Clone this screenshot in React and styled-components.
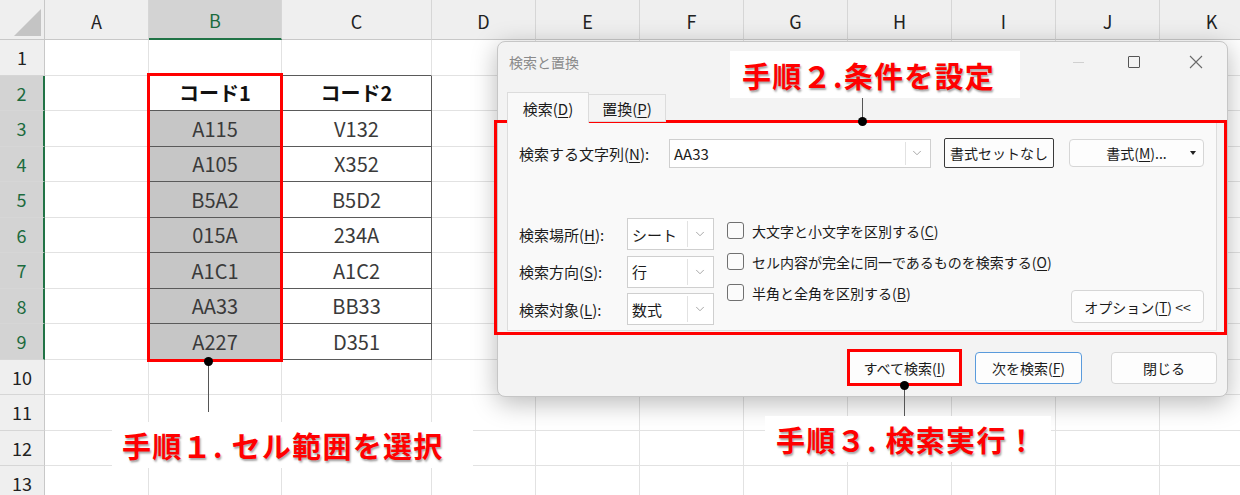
import React from "react";
import styled, { createGlobalStyle, css } from "styled-components";
import { ChevronDown } from "lucide-react";

const JP = `"Noto Sans CJK JP", "Noto Sans", sans-serif`;
const GREEN = "#217346";

const GlobalStyle = createGlobalStyle`
  html, body { margin: 0; padding: 0; background: #fff; }
  body { font-family: ${JP}; }
  * { box-sizing: border-box; }
`;

const Frame = styled.div`
  position: relative;
  width: 1240px;
  height: 495px;
  overflow: hidden;
  background: #fff;
`;

/* ---------- spreadsheet ---------- */

const Sheet = styled.div`
  display: grid;
  grid-template-columns: 45px 104px 133px 150px repeat(8, 104px);
  grid-template-rows: 40px repeat(13, 35.5px);
  font-family: ${JP};
`;

const Corner = styled.div`
  position: relative;
  background: #efefef;
  border-right: 1px solid #c8c8c8;
  border-bottom: 1px solid #c8c8c8;
  &::after {
    content: "";
    position: absolute;
    right: 3px;
    bottom: 3px;
    border-style: solid;
    border-width: 0 0 27px 27px;
    border-color: transparent transparent #c4c4c4 transparent;
  }
`;

const ColHead = styled.div`
  display: flex;
  align-items: center;
  justify-content: center;
  background: #efefef;
  border-right: 1px solid #d6d6d6;
  border-bottom: 1px solid #c8c8c8;
  font-size: 18px;
  color: #222;
  padding-top: 2px;
  ${(p) =>
    p.$active &&
    css`
      background: #d3d3d3;
      color: #1c6b3e;
      border-bottom: 2px solid ${GREEN};
    `}
`;

const RowHead = styled.div`
  display: flex;
  align-items: center;
  justify-content: center;
  background: #efefef;
  border-right: 1px solid #c8c8c8;
  border-bottom: 1px solid #d6d6d6;
  font-size: 18px;
  color: #222;
  ${(p) =>
    p.$active &&
    css`
      background: #d3d3d3;
      color: #1c6b3e;
      border-right: 2px solid ${GREEN};
    `}
`;

const Cell = styled.div`
  display: flex;
  align-items: center;
  justify-content: center;
  border-right: 1px solid ${(p) => (p.$darkRight ? "#5a5a5a" : "#e2e2e2")};
  border-bottom: 1px solid ${(p) => (p.$darkBottom ? "#5a5a5a" : "#e2e2e2")};
  background: ${(p) => (p.$fill ? "#c6c6c6" : "#fff")};
  font-size: 20px;
  font-weight: ${(p) => (p.$bold ? 700 : 400)};
  color: ${(p) => (p.$bold ? "#111" : "#3a3a3a")};
`;

const COLS = ["A", "B", "C", "D", "E", "F", "G", "H", "I", "J", "K"];
const colB = ["コード1", "A115", "A105", "B5A2", "015A", "A1C1", "AA33", "A227"];
const colC = ["コード2", "V132", "X352", "B5D2", "234A", "A1C2", "BB33", "D351"];

function Spreadsheet() {
  const rows = [];
  for (let r = 1; r <= 13; r++) {
    const inTable = r >= 2 && r <= 9;
    rows.push(
      <RowHead key={"h" + r} $active={inTable}>
        {r}
      </RowHead>
    );
    COLS.forEach((c, i) => {
      let text = "";
      if (inTable && c === "B") text = colB[r - 2];
      if (inTable && c === "C") text = colC[r - 2];
      const darkRight = inTable && i <= 2;
      const darkBottom = (c === "B" || c === "C") && r >= 1 && r <= 9;
      rows.push(
        <Cell
          key={c + r}
          $darkRight={darkRight}
          $darkBottom={darkBottom}
          $fill={c === "B" && r >= 3 && r <= 9}
          $bold={r === 2 && inTable}
        >
          {text}
        </Cell>
      );
    });
  }
  return (
    <Sheet>
      <Corner />
      {COLS.map((c) => (
        <ColHead key={c} $active={c === "B"}>
          {c}
        </ColHead>
      ))}
      {rows}
    </Sheet>
  );
}

/* ---------- find & replace dialog ---------- */

const Dialog = styled.div`
  position: absolute;
  left: 497px;
  top: 41px;
  width: 731px;
  height: 356px;
  background: #f3f3f3;
  border: 1px solid #c6c6c6;
  border-radius: 8px;
  box-shadow: 0 6px 26px rgba(0, 0, 0, 0.28);
  display: flex;
  flex-direction: column;
  font-family: ${JP};
  font-size: 14px;
  color: #1b1b1b;
`;

const TitleBar = styled.div`
  height: 40px;
  display: flex;
  align-items: center;
  padding-left: 11px;
`;

const Title = styled.span`
  color: #8a8a8a;
  font-size: 14px;
`;

const WinControls = styled.div`
  margin-left: auto;
  display: flex;
  height: 100%;
`;

const WinButton = styled.div`
  width: ${(p) => p.$w}px;
  height: 100%;
  display: flex;
  align-items: center;
  justify-content: center;
`;

const MinGlyph = styled.span`
  width: 11px;
  height: 1px;
  background: #d0d0d0;
`;

const MaxGlyph = styled.span`
  width: 12px;
  height: 12px;
  border: 1px solid #555;
  border-radius: 1px;
`;

const TabRow = styled.div`
  margin-top: 10px;
  padding-left: 9px;
  display: flex;
  align-items: flex-end;
  height: 30px;
  position: relative;
  z-index: 1;
`;

const Tab = styled.div`
  height: ${(p) => (p.$active ? 31 : 28)}px;
  width: ${(p) => p.$w}px;
  display: flex;
  align-items: center;
  justify-content: center;
  font-size: 15px;
  border: 1px solid #dcdcdc;
  border-bottom: ${(p) => (p.$active ? "none" : "1px solid #dcdcdc")};
  background: ${(p) => (p.$active ? "#f9f9f9" : "#f4f4f4")};
  margin-bottom: ${(p) => (p.$active ? -1 : 0)}px;
  border-left: ${(p) => (p.$active ? "1px solid #dcdcdc" : "none")};
`;

const U = styled.span`
  text-decoration: underline;
  text-underline-offset: 2px;
`;

const Panel = styled.div`
  margin: 0 10px 0 9px;
  height: 209px;
  background: #f9f9f9;
  border: 1px solid #dcdcdc;
  padding: 15px 12px 5px 11px;
  display: flex;
  flex-direction: column;
`;

const FindRow = styled.div`
  display: flex;
  align-items: center;
`;

const FieldLabel = styled.span`
  width: ${(p) => p.$w}px;
  flex-shrink: 0;
  white-space: nowrap;
  font-size: 15px;
`;

const Combo = styled.div`
  width: ${(p) => p.$w}px;
  height: ${(p) => p.$h}px;
  background: #fff;
  border: 1px solid #cfcfcf;
  display: flex;
  align-items: stretch;
`;

const ComboText = styled.span`
  flex: 1;
  display: flex;
  align-items: center;
  padding-left: 4px;
  font-size: 15px;
`;

const ComboArrow = styled.span`
  width: ${(p) => p.$w || 24}px;
  display: flex;
  align-items: center;
  justify-content: center;
  margin: 2px 2px 2px 0;
  border-left: 1px solid #e2e2e2;
  color: #8c8c8c;
`;

const DlgButton = styled.div`
  width: ${(p) => p.$w}px;
  height: ${(p) => p.$h || 32}px;
  margin-left: ${(p) => p.$ml || 0}px;
  display: flex;
  align-items: center;
  justify-content: center;
  position: relative;
  flex-shrink: 0;
  background: #fdfdfd;
  border: 1px solid #d6d6d6;
  border-radius: 4px;
  font-size: 14px;
  white-space: nowrap;
  ${(p) =>
    p.$strong &&
    css`
      border: 1.5px solid #3a3a3a;
      border-radius: 2px;
    `}
  ${(p) =>
    p.$primary &&
    css`
      border: 1.5px solid #5a9bdc;
    `}
  ${(p) =>
    p.$marked &&
    css`
      border: none;
      border-radius: 0;
      box-shadow: 0 0 0 3px #ff0000;
    `}
`;

const OptionsButton = styled(DlgButton)`
  margin-left: auto;
  align-self: flex-end;
  margin-bottom: 2px;
`;

const Caret = styled.span`
  position: absolute;
  right: 7px;
  top: 50%;
  margin-top: -2px;
  border-style: solid;
  border-width: 4px 3.5px 0 3.5px;
  border-color: #222 transparent transparent transparent;
`;

const OptionsArea = styled.div`
  margin-top: auto;
  display: flex;
  align-items: flex-start;
`;

const SelectGrid = styled.div`
  display: grid;
  grid-template-columns: 108px 87px;
  row-gap: 5.5px;
  align-items: center;
`;

const CheckList = styled.div`
  margin-left: 13px;
  margin-top: -3px;
  display: flex;
  flex-direction: column;
`;

const CheckItem = styled.label`
  height: 31px;
  display: flex;
  align-items: center;
  gap: 8px;
  font-size: 14px;
  white-space: nowrap;
`;

const Box = styled.span`
  width: 17px;
  height: 17px;
  border: 1px solid #707070;
  border-radius: 3px;
  background: #fbfbfb;
  flex-shrink: 0;
`;

const Footer = styled.div`
  margin-top: auto;
  padding: 0 10px 12px 0;
  display: flex;
  justify-content: flex-end;
`;

function Chevron() {
  return <ChevronDown size={14} strokeWidth={1.3} />;
}

function CloseGlyph() {
  return (
    <svg width="14" height="14" viewBox="0 0 14 14">
      <path d="M1 1 L13 13 M13 1 L1 13" stroke="#6a6a6a" strokeWidth="1.1" fill="none" />
    </svg>
  );
}

const selects = [
  { label: "検索場所", key: "H", value: "シート" },
  { label: "検索方向", key: "S", value: "行" },
  { label: "検索対象", key: "L", value: "数式" },
];

const checks = [
  { text: "大文字と小文字を区別する", key: "C" },
  { text: "セル内容が完全に同一であるものを検索する", key: "O" },
  { text: "半角と全角を区別する", key: "B" },
];

function FindDialog() {
  return (
    <Dialog>
      <TitleBar>
        <Title>検索と置換</Title>
        <WinControls>
          <WinButton $w={50}>
            <MinGlyph />
          </WinButton>
          <WinButton $w={62}>
            <MaxGlyph />
          </WinButton>
          <WinButton $w={62}>
            <CloseGlyph />
          </WinButton>
        </WinControls>
      </TitleBar>
      <TabRow>
        <Tab $active $w={82}>
          検索(<U>D</U>)
        </Tab>
        <Tab $w={77}>
          置換(<U>P</U>)
        </Tab>
      </TabRow>
      <Panel>
        <FindRow>
          <FieldLabel $w={150}>
            検索する文字列(<U>N</U>):
          </FieldLabel>
          <Combo $w={262} $h={29}>
            <ComboText>AA33</ComboText>
            <ComboArrow $w={23}>
              <Chevron />
            </ComboArrow>
          </Combo>
          <DlgButton $w={110} $h={30} $ml={13} $strong>
            書式セットなし
          </DlgButton>
          <DlgButton $w={135} $h={28} $ml={15}>
            書式(<U>M</U>)...
            <Caret />
          </DlgButton>
        </FindRow>
        <OptionsArea>
          <SelectGrid>
            {selects.map((s) => (
              <React.Fragment key={s.key}>
                <FieldLabel $w={108}>
                  {s.label}(<U>{s.key}</U>):
                </FieldLabel>
                <Combo $w={87} $h={32}>
                  <ComboText>{s.value}</ComboText>
                  <ComboArrow>
                    <Chevron />
                  </ComboArrow>
                </Combo>
              </React.Fragment>
            ))}
          </SelectGrid>
          <CheckList>
            {checks.map((c) => (
              <CheckItem key={c.key}>
                <Box />
                <span>
                  {c.text}(<U>{c.key}</U>)
                </span>
              </CheckItem>
            ))}
          </CheckList>
          <OptionsButton $w={133} $h={33}>
            オプション(<U>T</U>) &lt;&lt;
          </OptionsButton>
        </OptionsArea>
      </Panel>
      <Footer>
        <DlgButton $w={109} $h={31} $marked>
          すべて検索(<U>I</U>)
        </DlgButton>
        <DlgButton $w={107} $ml={16} $primary>
          次を検索(<U>F</U>)
        </DlgButton>
        <DlgButton $w={106} $ml={29}>
          閉じる
        </DlgButton>
      </Footer>
    </Dialog>
  );
}

/* ---------- annotations ---------- */

const RedFrame = styled.div`
  position: absolute;
  left: ${(p) => p.$x}px;
  top: ${(p) => p.$y}px;
  width: ${(p) => p.$w}px;
  height: ${(p) => p.$h}px;
  border: 3px solid #ff0000;
  pointer-events: none;
`;

const Callout = styled.div`
  position: absolute;
  left: ${(p) => p.$x}px;
  top: ${(p) => p.$y}px;
  width: ${(p) => p.$w}px;
  height: ${(p) => p.$h}px;
  padding-left: ${(p) => p.$pad}px;
  background: #fff;
  display: flex;
  align-items: center;
  font-family: ${JP};
  font-size: 29px;
  font-weight: 700;
  letter-spacing: 1.3px;
  color: #ff0000;
  white-space: nowrap;
  text-shadow: 1px 2px 2px rgba(0, 0, 0, 0.35);
`;

const Leader = styled.div`
  position: absolute;
  left: ${(p) => p.$x}px;
  top: ${(p) => p.$y}px;
  height: ${(p) => p.$h}px;
  width: 0;
  border-left: 1px solid #555;
  &::after {
    content: "";
    position: absolute;
    left: -5px;
    ${(p) => (p.$dotTop ? "top: -4.5px;" : "bottom: -4.5px;")}
    width: 9px;
    height: 9px;
    border-radius: 50%;
    background: #000;
  }
`;

export default function App() {
  return (
    <>
      <GlobalStyle />
      <Frame>
        <Spreadsheet />
        <RedFrame $x={147} $y={73} $w={136} $h={289} />
        <FindDialog />
        <RedFrame $x={494} $y={120} $w={733} $h={215} />

        <Leader $x={208} $y={361} $h={51} $dotTop />
        <Callout $x={112} $y={422} $w={361} $h={46} $pad={10}>
          手順１. セル範囲を選択
        </Callout>

        <Leader $x={862} $y={97} $h={24} />
        <Callout $x={730} $y={51} $w={290} $h={47} $pad={12}>
          手順２.条件を設定
        </Callout>

        <Leader $x={904} $y={385} $h={31} $dotTop />
        <Callout $x={765} $y={416} $w={286} $h={46} $pad={11}>
          手順３. 検索実行！
        </Callout>
      </Frame>
    </>
  );
}
